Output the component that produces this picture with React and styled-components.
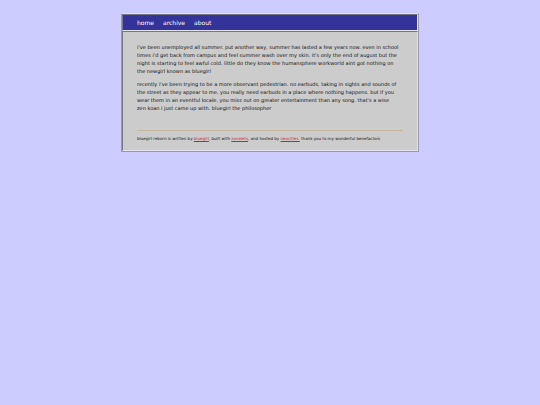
import React from "react";
import styled, { createGlobalStyle } from "styled-components";

const PAGE_COLOR = "#ccccff";
const PANEL_COLOR = "#cccccc";
const NAV_COLOR = "#333399";
const LINK_COLOR = "#d41c2c";
const EDGE_LIGHT = "#e2e2ea";
const EDGE_DARK = "#777788";
const EDGE_SHADE = "#9999aa";

const navLinks = ["home", "archive", "about"];

const paragraphs = [
  `i've been unemployed all summer. put another way, summer has lasted a few
  years now. even in school times i'd get back from campus and feel summer
  wash over my skin. it's only the end of august but the night is starting to
  feel awful cold. little do they know the humansphere workworld aint got
  nothing on the newgirl known as bluegirl`,
  `recently i've been trying to be a more observant pedestrian. no earbuds,
  taking in sights and sounds of the street as they appear to me. you really
  need earbuds in a place where nothing happens. but if you wear them in an
  eventful locale, you miss out on greater entertainment than any song. that's
  a wise zen\u00a0koan i just came up with. bluegirl the philosopher`,
];

const App = () => (
  <>
    <GlobalStyle />
    <Container>
      <Nav>
        {navLinks.map((title) => (
          <NavLink key={title} href="#">
            {title}
          </NavLink>
        ))}
      </Nav>
      <Content>
        {paragraphs.map((text) => (
          <Paragraph key={text}>{text}</Paragraph>
        ))}
        <Footer>
          bluegirl reborn is written by <FooterLink href="#">bluegirl</FooterLink>
          , built with <FooterLink href="#">zonelets</FooterLink>, and hosted by{" "}
          <FooterLink href="#">neocities.</FooterLink> thank you to my wonderful
          benefactors
        </Footer>
      </Content>
    </Container>
  </>
);

const GlobalStyle = createGlobalStyle`
  body {
    margin: 0;
    padding: 13px 8px;
    background: ${PAGE_COLOR};
    color: #111111;
    font-family: "DejaVu Sans", Verdana, sans-serif;
    font-size: 5px;
    line-height: 8px;
  }
`;

const Container = styled.div`
  box-sizing: border-box;
  max-width: 298px;
  margin: 0 auto;
  border: 1px solid;
  border-color: ${EDGE_LIGHT} ${EDGE_SHADE} ${EDGE_SHADE} ${EDGE_SHADE};
  background: ${PANEL_COLOR};
`;

const Nav = styled.nav`
  display: flex;
  gap: 9px;
  padding: 4px 14px 3px;
  border: 1px solid;
  border-color: ${EDGE_DARK} ${EDGE_LIGHT} ${EDGE_LIGHT} ${EDGE_DARK};
  background: ${NAV_COLOR};
`;

const NavLink = styled.a`
  color: #ffffff;
  font-size: 6px;
  text-decoration: none;
`;

const Content = styled.main`
  padding: 11px 14px 7px;
  border: 1px solid;
  border-color: ${EDGE_DARK} ${EDGE_LIGHT} ${EDGE_LIGHT} ${EDGE_DARK};
`;

const Paragraph = styled.p`
  margin: 0 0 5px;
`;

const Footer = styled.footer`
  margin-top: 18px;
  padding-top: 4px;
  border-top: 1px solid #c6b79c;
  font-size: 4px;
`;

const FooterLink = styled.a`
  color: ${LINK_COLOR};
`;

export default App;
